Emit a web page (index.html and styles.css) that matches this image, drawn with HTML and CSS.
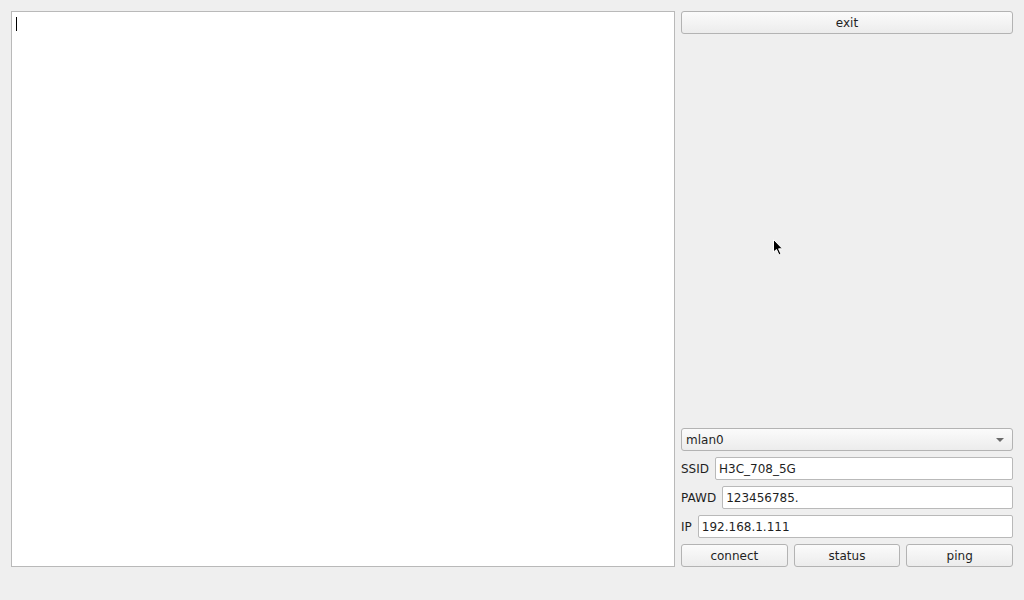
FILE: index.html
```html
<!DOCTYPE html>
<html lang="en">
  <head>
    <meta charset="UTF-8" />
    <title>wifi tool</title>
    <link rel="stylesheet" href="styles.css">
  </head>
  <body>
    <div class="window">
      <div class="log-box">
        <span class="caret"></span>
      </div>

      <div class="side-panel">
        <button class="btn">exit</button>

        <div class="form-area">
          <div class="combo">
            <span>mlan0</span>
            <span class="combo-arrow"></span>
          </div>
          <div class="field-row">
            <label>SSID</label>
            <div class="line-edit">H3C_708_5G</div>
          </div>
          <div class="field-row">
            <label>PAWD</label>
            <div class="line-edit">123456785.</div>
          </div>
          <div class="field-row">
            <label>IP</label>
            <div class="line-edit">192.168.1.111</div>
          </div>
          <div class="button-row">
            <button class="btn">connect</button>
            <button class="btn">status</button>
            <button class="btn">ping</button>
          </div>
        </div>
      </div>
    </div>

    <!-- mouse pointer seen in the capture -->
    <svg class="pointer" width="12" height="18" viewBox="0 0 12 18">
      <path d="M0.5 0.5 L0.5 13 L3.5 10.5 L6 16 L8 15 L5.6 9.8 L9.5 9.8 Z" fill="#000" stroke="#fff" stroke-width="1" />
    </svg>
  </body>
</html>
```

FILE: styles.css
```css
* {
  margin: 0;
  padding: 0;
  box-sizing: border-box;
}

body {
  background: #efefef;
  font-family: "DejaVu Sans", sans-serif;
  font-size: 12px;
  color: #1f1f1f;
  width: 1024px;
  height: 600px;
  overflow: hidden;
}

.window {
  display: flex;
  gap: 6px;
  padding: 11px;
  height: 578px;
}

.log-box {
  width: 664px;
  background: #fff;
  border: 1px solid #b9b9b9;
  padding: 5px 4px;
}

.caret {
  display: block;
  width: 1px;
  height: 14px;
  background: #000;
}

.side-panel {
  flex: 1;
  display: flex;
  flex-direction: column;
  justify-content: space-between;
}

.btn {
  height: 23px;
  width: 100%;
  font-family: "DejaVu Sans", sans-serif;
  font-size: 12px;
  color: #1f1f1f;
  border: 1px solid #b3b3b3;
  border-radius: 3px;
  background: linear-gradient(#fbfbfb, #ececec);
}

.form-area {
  display: flex;
  flex-direction: column;
  gap: 6px;
}

.combo {
  height: 23px;
  display: flex;
  align-items: center;
  justify-content: space-between;
  padding: 0 8px 0 4px;
  border: 1px solid #b3b3b3;
  border-radius: 3px;
  background: linear-gradient(#fbfbfb, #ececec);
}

.combo-arrow {
  width: 0;
  height: 0;
  border-left: 4px solid transparent;
  border-right: 4px solid transparent;
  border-top: 4px solid #6a6a6a;
}

.field-row {
  display: flex;
  align-items: center;
  gap: 6px;
}

.field-row label {
  white-space: nowrap;
}

.line-edit {
  flex: 1;
  height: 23px;
  line-height: 22px;
  padding: 0 3px;
  background: #fff;
  border: 1px solid #b9b9b9;
  border-radius: 2px;
}

.button-row {
  display: flex;
  gap: 6px;
}

.pointer {
  position: absolute;
  left: 773px;
  top: 239px;
}
```
